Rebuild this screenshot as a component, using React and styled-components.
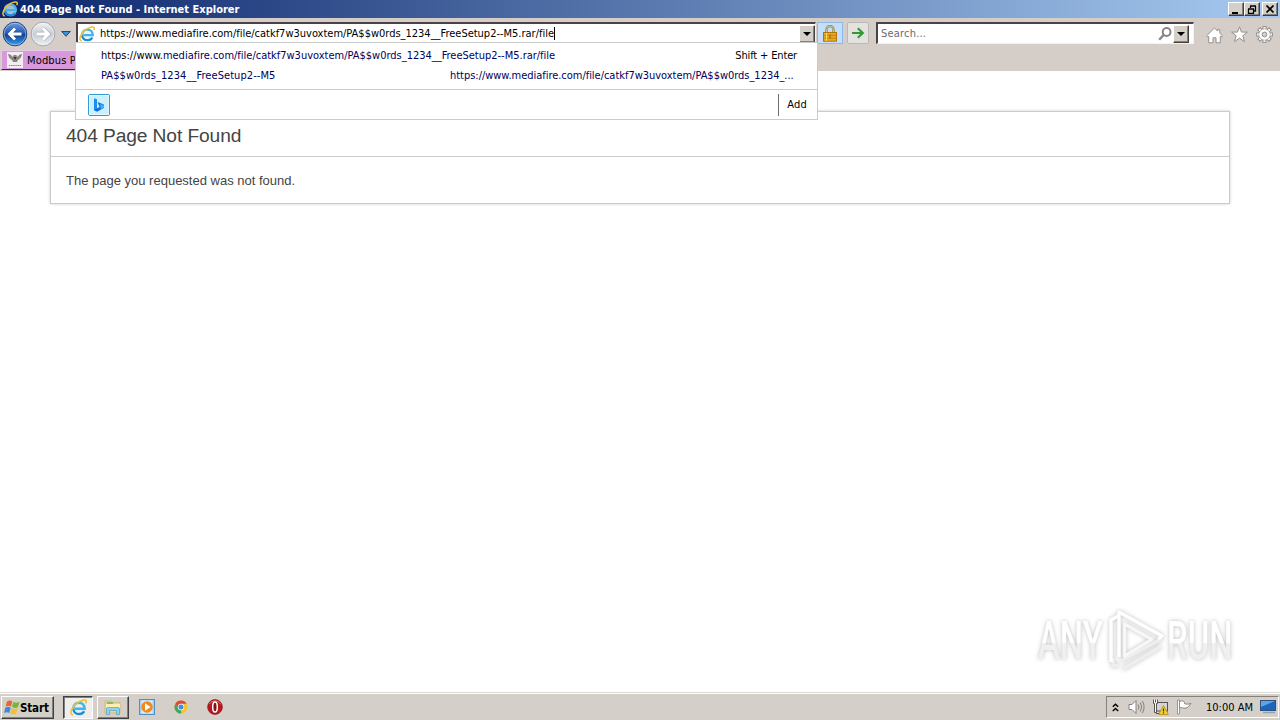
import React from "react";
import styled, { createGlobalStyle, css } from "styled-components";

const Global = createGlobalStyle`
  * { box-sizing: border-box; }
  body { margin: 0; background: #fff; overflow: hidden; }
  svg { display: block; flex: none; }
`;

const uiFont = css`
  font-family: "DejaVu Sans Condensed", "DejaVu Sans", sans-serif;
  font-stretch: condensed;
  font-size: 11px;
  line-height: 14px;
  white-space: pre;
`;

const Desktop = styled.div`
  position: relative;
  width: 1280px;
  height: 720px;
  display: flex;
  flex-direction: column;
  background: #fff;
  overflow: hidden;
`;

const TitleBar = styled.header`
  height: 18px;
  flex: none;
  display: flex;
  align-items: center;
  padding: 0 2px 0 2px;
  background: linear-gradient(90deg, #0b256b 0%, #a6caf0 100%);
`;

const Title = styled.h1`
  ${uiFont}
  flex: 1;
  margin: 0 0 0 2px;
  padding-top: 1px;
  font-weight: bold;
  color: #fff;
`;

const raised = css`
  background: #d4d0c8;
  border: 1px solid;
  border-color: #fff #404040 #404040 #fff;
  box-shadow: inset -1px -1px 0 #808080;
`;

const CaptionButton = styled.button`
  ${raised}
  width: 16px;
  height: 14px;
  padding: 0;
  margin-left: ${(p) => p.$gap || 0}px;
  display: flex;
  align-items: center;
  justify-content: center;
`;

const Chrome = styled.div`
  height: 53px;
  flex: none;
  display: flex;
  flex-direction: column;
  background: #d5cec8;
`;

const NavRow = styled.nav`
  height: 32px;
  display: flex;
  align-items: flex-start;
  padding: 3px 0 0 2px;
`;

const NavIcon = styled.span`
  margin: ${(p) => p.$m || "0"};
`;

const Field = styled.div`
  width: ${(p) => p.$w}px;
  height: 22px;
  margin: ${(p) => p.$m || "0"};
  display: flex;
  align-items: center;
  background: #fff;
  border: 1px solid;
  border-width: 2px 1px 1px 2px;
  border-color: #4a4244 #f4f2f0 #f4f2f0 #4a4244;
`;

const FieldText = styled.span`
  ${uiFont}
  letter-spacing: ${(p) => p.$track || 0}px;
  color: ${(p) => p.$c || "#000"};
  margin-left: ${(p) => p.$ml || 0}px;
  padding-top: ${(p) => p.$drop || 0}px;
`;

const Caret = styled.i`
  width: 1px;
  height: 13px;
  background: #000;
`;

const DropButton = styled.button`
  ${raised}
  width: 16px;
  height: 18px;
  padding: 0;
  margin: ${(p) => p.$m || "0"};
  display: flex;
  align-items: center;
  justify-content: center;
`;

const ToolButton = styled.button`
  width: ${(p) => p.$w}px;
  height: 22px;
  padding: 0;
  margin: ${(p) => p.$m};
  display: flex;
  align-items: center;
  justify-content: center;
  background: ${(p) => (p.$active ? "#c5def9" : "#e4e2de")};
  border: 1px solid ${(p) => (p.$active ? "#8cb9ee" : "#b9b8b6")};
  border-radius: ${(p) => (p.$active ? 0 : 2)}px;
`;

const Spacer = styled.div`
  flex: 1;
`;

const Favorite = styled.div`
  width: 110px;
  height: 20px;
  margin-left: 1px;
  display: flex;
  align-items: center;
  padding-left: 5px;
  background: #d798dc;
  border-top: 1px solid #e9c9ea;
  border-left: 1px solid #e9c9ea;
  border-bottom: 1px solid #3b2a3d;
`;

const Suggestions = styled.section`
  position: absolute;
  left: 75px;
  top: 42px;
  width: 743px;
  height: 78px;
  display: flex;
  flex-direction: column;
  background: #fff;
  border: 1px solid #cbcbcb;
`;

const SuggestionRow = styled.div`
  display: flex;
  height: 20px;
  align-items: flex-start;
  padding: 6px 20px 0 25px;
`;

const Link = styled.span`
  ${uiFont}
  width: ${(p) => (p.$w ? p.$w + "px" : "auto")};
  letter-spacing: ${(p) => p.$track || 0}px;
  color: ${(p) => p.$c || "#00005e"};
`;

const SuggestFooter = styled.div`
  margin-top: auto;
  height: 30px;
  display: flex;
  align-items: center;
  justify-content: space-between;
  padding: 0 10px 0 12px;
  border-top: 1px solid #cbcbcb;
`;

const AddButton = styled.button`
  ${uiFont}
  height: 22px;
  padding: 1px 0 0 8px;
  border: 0;
  border-left: 1px solid #6d6d6d;
  background: none;
  color: #000;
  letter-spacing: 0.2px;
`;

const Page = styled.main`
  flex: 1;
  padding: 40px 50px 0;
`;

const Card = styled.article`
  height: 93px;
  border: 1px solid #cbcbcb;
  box-shadow: 0 0 3px rgba(0, 0, 0, 0.2);
  font-family: "Liberation Sans", Arial, sans-serif;
  color: #444;
`;

const CardTitle = styled.h2`
  height: 45px;
  margin: 0;
  padding: 1px 15px 0;
  border-bottom: 1px solid #cbcbcb;
  font-size: 19.2px;
  letter-spacing: -0.1px;
  font-weight: 400;
  line-height: 45px;
`;

const CardBody = styled.p`
  margin: 0;
  padding: 0 15px;
  font-size: 13px;
  line-height: 47px;
`;

const Watermark = styled.div`
  position: absolute;
  left: 1038px;
  top: 608px;
  width: 200px;
  height: 66px;
  display: flex;
  align-items: center;
  filter: drop-shadow(0 0 2px rgba(0, 0, 0, 0.26));
`;

const MarkSlot = styled.div`
  width: ${(p) => p.$w}px;
  flex: none;
`;

const MarkWord = styled.span`
  display: block;
  width: max-content;
  font: 500 53px/66px Roboto, sans-serif;
  transform: scaleX(${(p) => p.$scale});
  transform-origin: 0 50%;
  background: linear-gradient(#fff 52%, #f0f0f0 54%, #eee 100%);
  background-clip: text;
  color: transparent;
  white-space: nowrap;
`;

const Taskbar = styled.footer`
  height: 28px;
  flex: none;
  display: flex;
  align-items: flex-start;
  padding: 3px 1px 0 1px;
  background: #d5cfc9;
  border-top: 1px solid #dcd8d3;
  box-shadow: inset 0 1px 0 #fff;
`;

const TaskButton = styled.button`
  width: ${(p) => p.$w}px;
  height: 23px;
  margin: ${(p) => p.$m || "0"};
  padding: 0 0 0 ${(p) => (p.$start ? 2 : 0)}px;
  display: flex;
  align-items: center;
  justify-content: ${(p) => (p.$start ? "flex-start" : "center")};
  background: ${(p) => (p.$pressed ? "#f0eeeb" : "#d4d0c8")};
  border: 1px solid;
  border-color: ${(p) => (p.$pressed ? "#404040 #fff #fff #404040" : "#fff #404040 #404040 #fff")};
  box-shadow: ${(p) => (p.$pressed ? "inset 1px 1px 0 #808080" : "inset -1px -1px 0 #808080")};
`;

const StartLabel = styled.span`
  ${uiFont}
  font-weight: bold;
  font-size: 11.5px;
  letter-spacing: -0.15px;
  margin-left: -1px;
  color: #000;
`;

const Tray = styled.div`
  width: 173px;
  height: 22px;
  display: flex;
  align-items: center;
  padding-left: 5px;
  border: 1px solid;
  border-color: #85817c #fff #fff #85817c;
`;

const IE = ({ size = 16 }) => (
  <svg width={size} height={size} viewBox="0 0 16 16">
    <ellipse cx="8.300" cy="8.800" rx="6.600" ry="6.400" fill="#d9f3fd" opacity=".75" />
    <path d="M4.600 9.100h9.200C13.800 5.600 11.500 3.600 8.500 3.600 5.400 3.600 3.200 5.900 3.200 8.900s2.200 5.300 5.300 5.300c2.200 0 4-1 4.900-2.800" fill="none" stroke="#45b3ea" strokeWidth="2.300" />
    <path d="M3.200 10c.5 2.600 2.600 4.200 5.300 4.200 2 0 3.600-.8 4.600-2.200" fill="none" stroke="#1f83cf" strokeWidth="1.600" />
    <path d="M2.800 15C-1.400 14.200 2 6.600 7.800 3 11.400.9 15.200.2 15.300 2.200c0 .7-.2 1.400-.6 2" fill="none" stroke="#eebf38" strokeWidth="1.500" />
  </svg>
);

const RoundArrow = ({ forward }) => (
  <svg width="26" height="26" viewBox="0 0 26 26">
    <defs>
      <linearGradient id="blueDisc" x2="0" y2="1">
        <stop stopColor="#6d9ee0" /><stop offset=".48" stopColor="#2458b4" />
        <stop offset=".52" stopColor="#124096" /><stop offset="1" stopColor="#38a4ec" />
      </linearGradient>
      <linearGradient id="greyDisc" x2="0" y2="1">
        <stop stopColor="#f2f3f4" /><stop offset=".5" stopColor="#c8cdd5" /><stop offset="1" stopColor="#eef1f4" />
      </linearGradient>
    </defs>
    <circle cx="13" cy="13" r="11.800" fill={forward ? "url(#greyDisc)" : "url(#blueDisc)"} stroke={forward ? "#a2a6ae" : "#1d4280"} />
    <circle cx="13" cy="13" r="10.800" fill="none" stroke="#fff" opacity=".4" />
    <g transform={forward ? "matrix(-1 0 0 1 26 0)" : undefined}>
      <path d="M13 7.500 7.600 13l5.400 5.500M8 13h11.500" fill="none" stroke={forward ? "#8f95a0" : "#153a7d"} strokeWidth="4.600" opacity=".55" />
      <path d="M13 7.500 7.600 13l5.400 5.500M8 13h11.500" fill="none" stroke="#fff" strokeWidth="3" />
    </g>
  </svg>
);

const Down = () => (
  <svg width="8" height="4" viewBox="0 0 8 4"><path d="M0 0h8L4 4z" fill="#000" /></svg>
);

const Magnifier = () => (
  <svg width="14" height="14" viewBox="0 0 14 14" fill="none" stroke="#85858a" strokeWidth="2">
    <circle cx="8.600" cy="5" r="3.900" /><path d="M5.800 7.800 1.200 12.700" strokeWidth="2.400" />
  </svg>
);

const Lock = () => (
  <svg width="14" height="17" viewBox="0 0 14 17">
    <path d="M3.500 8V4.500a3.500 3.500 0 0 1 7 0V8" fill="none" stroke="#8f8556" strokeWidth="2.400" />
    <path d="M3.500 8V4.500a3.500 3.500 0 0 1 7 0V8" fill="none" stroke="#dcd6ad" strokeWidth=".8" />
    <rect x=".5" y="7.500" width="13" height="8.700" fill="#eda91d" stroke="#ae7510" />
    <path d="M1 10.300h12M1 13.200h12" stroke="#bd8213" /><path d="M3.500 8v8" stroke="#ffd75c" />
    <path d="M7 9.600v4" stroke="#9a6a12" strokeWidth="1.200" />
  </svg>
);

const Go = () => (
  <svg width="14" height="12" viewBox="0 0 14 12" fill="none" stroke="#309b34" strokeWidth="2.200">
    <path d="M1 6h10M6.800 1.200 11.800 6l-5 4.800" />
  </svg>
);

const Home = () => (
  <svg width="17" height="17" viewBox="0 0 17 17">
    <path d="m8.500 1 3 3V2.600h2.300v3.700l2.600 2.500-1.200 1.300-.9-.6v6.300H10v-5H7v5H2.700V9.500l-.9.600L.6 8.800z" fill="#fff" stroke="#93908f" />
  </svg>
);
const Star = () => (
  <svg width="17" height="17" viewBox="0 0 17 17">
    <path d="m8.500.8 2 5.300h5.900l-4.600 3.600 1.700 6-5-3.600-5 3.600 1.700-6L.6 6.100h5.900z" fill="#fff" stroke="#93908f" />
  </svg>
);
const Gear = () => (
  <svg width="17" height="17" viewBox="-8.500 -8.500 17 17">
    {[0, 45, 90, 135, 180, 225, 270, 315].map((a) => (
      <rect key={a} x="-1.600" y="-7.900" width="3.200" height="4" fill="#fff" stroke="#93908f" transform={`rotate(${a})`} />
    ))}
    <circle r="5.600" fill="#fff" stroke="#93908f" strokeWidth=".7" />
    <circle r="5" fill="#fff" />
    <circle r="2.400" fill="#d5cec8" stroke="#93908f" />
  </svg>
);

const Favicon = () => (
  <svg width="16" height="16" viewBox="0 0 16 16">
    <rect width="16" height="16" fill="#f3eff0" />
    <path d="M1 2c2 0 3 1 5 3l.5-2h3l.5 2c2-2 3-3 5-3-.3 3-1.800 5-4 6l-1 2H6L5 8C2.800 7 1.300 5 1 2z" fill="#8c8687" />
    <path d="M6.500 5h3L8 8z" fill="#373235" /><path d="M2 13.500h12" stroke="#8c8687" strokeDasharray="1.500 .6" />
  </svg>
);

const Bing = () => (
  <svg width="22" height="22" viewBox="0 0 22 22">
    <rect x=".5" y=".5" width="21" height="21" rx="1.500" fill="#c8f0ff" stroke="#329bd2" />
    <rect x="1.500" y="1.500" width="19" height="19" fill="none" stroke="#e4f9ff" />
    <path d="M6 4.200 9 5.300v9.900l-3 1.500z" fill="#1b8ff0" />
    <path d="m9.600 8 6.200 2.400v3.500L9 17.700l-3-1.700 5.600-3z" fill="#1768df" />
    <path d="m12 10 3.800 1v2.800l-3 1.500z" fill="#35b7ee" />
  </svg>
);

const Windows = () => (
  <svg width="17" height="17" viewBox="0 0 17 17">
    <path d="M3 2.500C5 1 6.500 1.200 8.300 2.300L7 7.600C5.300 6.500 3.700 6.400 1.600 7.600z" fill="#e96532" />
    <path d="M9.300 2.900c2 1.100 4 1 6.200-.2L14 8c-2 1.200-4 1.200-6 .1z" fill="#78b43f" />
    <path d="M1.300 8.700c2-1.200 3.700-1.100 5.400 0L5.300 14C3.500 12.900 2 13 0 14.100z" fill="#3d8bd4" />
    <path d="M7.700 9.200c2 1.100 4 1 6-.1l-1.400 5.300c-2 1.200-4 1.200-6 .1z" fill="#f4bf31" />
  </svg>
);

const Folder = () => (
  <svg width="18" height="17" viewBox="0 0 18 17">
    <path d="M1 2h6l1 1.500h8V14H1z" fill="#ecd586" stroke="#ccb05c" strokeWidth=".6" />
    <path d="M2 5h14v4H2z" fill="#fbeeb0" /><path d="M3 4h6" stroke="#62b065" strokeWidth="1.500" />
    <path d="M2.500 15.500V10Q2.500 8.500 4 8.500h10q1.500 0 1.500 1.500v5.500h-3v-4h-7v4z" fill="#8ed2ef" stroke="#51a4cc" strokeWidth=".7" />
  </svg>
);

const Media = () => (
  <svg width="16" height="16" viewBox="0 0 16 16">
    <rect x=".5" y=".5" width="15" height="15" fill="#a9cfee" stroke="#4e8fc7" />
    <rect x="2.500" y="1.500" width="11" height="13" fill="#d9ecfa" />
    <circle cx="8" cy="8" r="5.800" fill="#f18a1c" /><path d="m6 4.300 5.600 3.700L6 11.700z" fill="#fff" />
  </svg>
);

const ChromeIcon = () => (
  <svg width="14" height="14" viewBox="0 0 14 14">
    <circle cx="7" cy="7" r="6.500" fill="#f4c52c" />
    <path d="M1.370 3.750A6.500 6.500 0 0 1 12.630 3.750H7L4.200 8.600z" fill="#dd4a3a" />
    <path d="M1.370 3.750 4.190 8.630 7 10.250 7.300 13.490A6.500 6.500 0 0 1 1.370 3.750" fill="#3fa65a" />
    <circle cx="7" cy="7" r="3.200" fill="#f5f8fc" /><circle cx="7" cy="7" r="2.500" fill="#4b87e0" />
  </svg>
);

const Opera = () => (
  <svg width="16" height="16" viewBox="0 0 16 16">
    <circle cx="8" cy="8" r="7.400" fill="#b81820" stroke="#8c141a" strokeWidth=".7" />
    <path d="M2.500 5A6.500 6.500 0 0 1 13.500 5" fill="none" stroke="#e2777a" />
    <ellipse cx="8" cy="8" rx="2.300" ry="5" fill="#861217" stroke="#fff" strokeWidth="1.500" />
  </svg>
);

const Chevrons = () => (
  <svg width="7" height="9" viewBox="0 0 7 9" fill="none" stroke="#000" strokeWidth="1.400">
    <path d="m.8 3.800 2.700-2.600 2.700 2.600M.8 8l2.700-2.600L6.200 8" />
  </svg>
);
const Speaker = () => (
  <svg width="17" height="16" viewBox="0 0 17 16" fill="none" stroke="#85827f">
    <path d="M1 5.500h3l4-4v13l-4-4H1z" fill="#fff" />
    <path d="M10.200 5.500q1.500 2.500 0 5M12.300 3.500q2.800 4.500 0 9M14.400 2q3.400 6 0 12" />
  </svg>
);
const Network = () => (
  <svg width="17" height="16" viewBox="0 0 17 16">
    <rect x="4.500" y="3.500" width="11" height="8.500" fill="#d4d4d2" stroke="#55534f" />
    <path d="M4 14.500h7" stroke="#55534f" />
    <path d="M1.500.5v4h1v9h2v-9h1v-4M3.500.5v3" fill="#fff" stroke="#55534f" />
    <path d="m11.500 6.500 4.800 9H6.700z" fill="#f7d22f" stroke="#b48a15" strokeWidth=".8" />
    <path d="M11.500 9.500v3M11.500 13.300v1.200" stroke="#3f3300" strokeWidth="1.200" />
  </svg>
);
const Flag = () => (
  <svg width="17" height="16" viewBox="0 0 17 16">
    <path d="M3.500 2.500c3-1.500 4 0 5 .8v1.200c2 1 4 .8 6.500-.2-1.500 2-2.500 4.500-6 5-2 0-3-1.300-5.500-.2z" fill="#fff" stroke="#85827f" />
    <path d="M1.500 1v14h2V1z" fill="#fff" stroke="#85827f" strokeWidth=".8" />
  </svg>
);
const ShowDesktop = () => (
  <svg width="17" height="14" viewBox="0 0 17 14">
    <rect x=".5" y=".5" width="15" height="10" fill="#1d66be" stroke="#345276" />
    <path d="M1 1h14L1 7z" fill="#5ca4e8" /><path d="M3 12.500h12" stroke="#8fa2b6" strokeWidth="1.500" />
  </svg>
);

const PlayMark = () => (
  <svg width="61" height="66" viewBox="0 0 61 66" fill="none" strokeWidth="3.400" strokeLinejoin="round">
    <path d="m15 53 41-22.500M7 50v8l6-1M17 61l38-22.500" stroke="#eee" />
    <path d="M12 8 5 12v42M13 49V4l43 24-4 3" stroke="#fff" />
    <path d="M18.500 16v32L46 31.500z" stroke="#f7f7f7" />
  </svg>
);

const url = "mediafire.com/file/catkf7w3uvoxtem/PA$$w0rds_1234__FreeSetup2--M5.rar/file";

export default function App() {
  return (
    <Desktop>
      <Global />
      <TitleBar>
        <IE />
        <Title>404 Page Not Found - Internet Explorer</Title>
        <CaptionButton><svg width="10" height="9"><path d="M1 7h6v2H1z" /></svg></CaptionButton>
        <CaptionButton>
          <svg width="10" height="9" fill="none" stroke="#000"><path d="M3 1h6M3.500 1v2M8.500 1v5H6M1 4h6M1.500 4v4.500h5V4" strokeWidth="1.300" /></svg>
        </CaptionButton>
        <CaptionButton $gap={2}>
          <svg width="8" height="8"><path d="m.5.5 7 7m0-7-7 7" stroke="#000" strokeWidth="1.700" /></svg>
        </CaptionButton>
      </TitleBar>
      <Chrome>
        <NavRow>
          <RoundArrow />
          <NavIcon $m="0 0 0 2px"><RoundArrow forward /></NavIcon>
          <NavIcon $m="10px 6px 0 5px">
            <svg width="10" height="6"><path d="M.7.500h8.600L5 5.300z" fill="#3d8fd0" stroke="#173f70" strokeWidth=".9" /></svg>
          </NavIcon>
          <Field $w={740} $m="1px 0 0 -1px">
            <NavIcon $m="0 0 0 1px"><IE /></NavIcon>
            <FieldText $ml={5} $track={-0.01}>{"https://www." + url}</FieldText>
            <Caret />
            <Spacer />
            <DropButton><Down /></DropButton>
          </Field>
          <ToolButton $active $w={26} $m="1px 4px 0 1px"><Lock /></ToolButton>
          <ToolButton $w={22} $m="1px 7px 0 0"><Go /></ToolButton>
          <Field $w={318} $m="1px 12px 0 0">
            <FieldText $c="#6b6b6b" $ml={3} $track={0.2} $drop={1}>Search...</FieldText>
            <Spacer />
            <Magnifier />
            <DropButton $m="0 4px 0 1px"><Down /></DropButton>
          </Field>
          <NavIcon $m="6px 8px 0 0"><Home /></NavIcon>
          <NavIcon $m="5px 8px 0 0"><Star /></NavIcon>
          <NavIcon $m="5px 0 0 0"><Gear /></NavIcon>
        </NavRow>
        <Favorite>
          <Favicon />
          <FieldText $ml={4} $drop={2} $track={0.15}>Modbus Poll</FieldText>
        </Favorite>
      </Chrome>
      <Page>
        <Card>
          <CardTitle>404 Page Not Found</CardTitle>
          <CardBody>The page you requested was not found.</CardBody>
        </Card>
      </Page>
      <Taskbar>
        <TaskButton $w={53} $start>
          <Windows /><StartLabel>Start</StartLabel>
        </TaskButton>
        <TaskButton $w={30} $m="0 4px 0 9px" $pressed><IE size={17} /></TaskButton>
        <TaskButton $w={32}><Folder /></TaskButton>
        <NavIcon $m="3px 0 0 10px"><Media /></NavIcon>
        <NavIcon $m="4px 0 0 19px"><ChromeIcon /></NavIcon>
        <NavIcon $m="3px 0 0 19px"><Opera /></NavIcon>
        <Spacer />
        <Tray>
          <Chevrons />
          <NavIcon $m="0 0 0 9px"><Speaker /></NavIcon>
          <NavIcon $m="0 0 0 7px"><Network /></NavIcon>
          <NavIcon $m="0 0 0 7px"><Flag /></NavIcon>
          <FieldText $ml={13} $drop={1}>10:00 AM</FieldText>
          <NavIcon $m="0 0 0 7px"><ShowDesktop /></NavIcon>
        </Tray>
      </Taskbar>
      <Suggestions>
        <SuggestionRow>
          <Link $c="#000">https://www.</Link>
          <Link $track={-0.01}>{url}</Link>
          <Spacer />
          <Link $c="#000" $track={-0.15}>Shift + Enter</Link>
        </SuggestionRow>
        <SuggestionRow>
          <Link $w={349} $track={0.07}>PA$$w0rds_1234__FreeSetup2--M5</Link>
          <Link $track={-0.03}>https://www.mediafire.com/file/catkf7w3uvoxtem/PA$$w0rds_1234_...</Link>
        </SuggestionRow>
        <SuggestFooter>
          <Bing />
          <AddButton>Add</AddButton>
        </SuggestFooter>
      </Suggestions>
      <Watermark>
        <MarkSlot $w={68}><MarkWord $scale={0.62}>ANY</MarkWord></MarkSlot>
        <PlayMark />
        <MarkSlot $w={66}><MarkWord $scale={0.62}>RUN</MarkWord></MarkSlot>
      </Watermark>
    </Desktop>
  );
}
